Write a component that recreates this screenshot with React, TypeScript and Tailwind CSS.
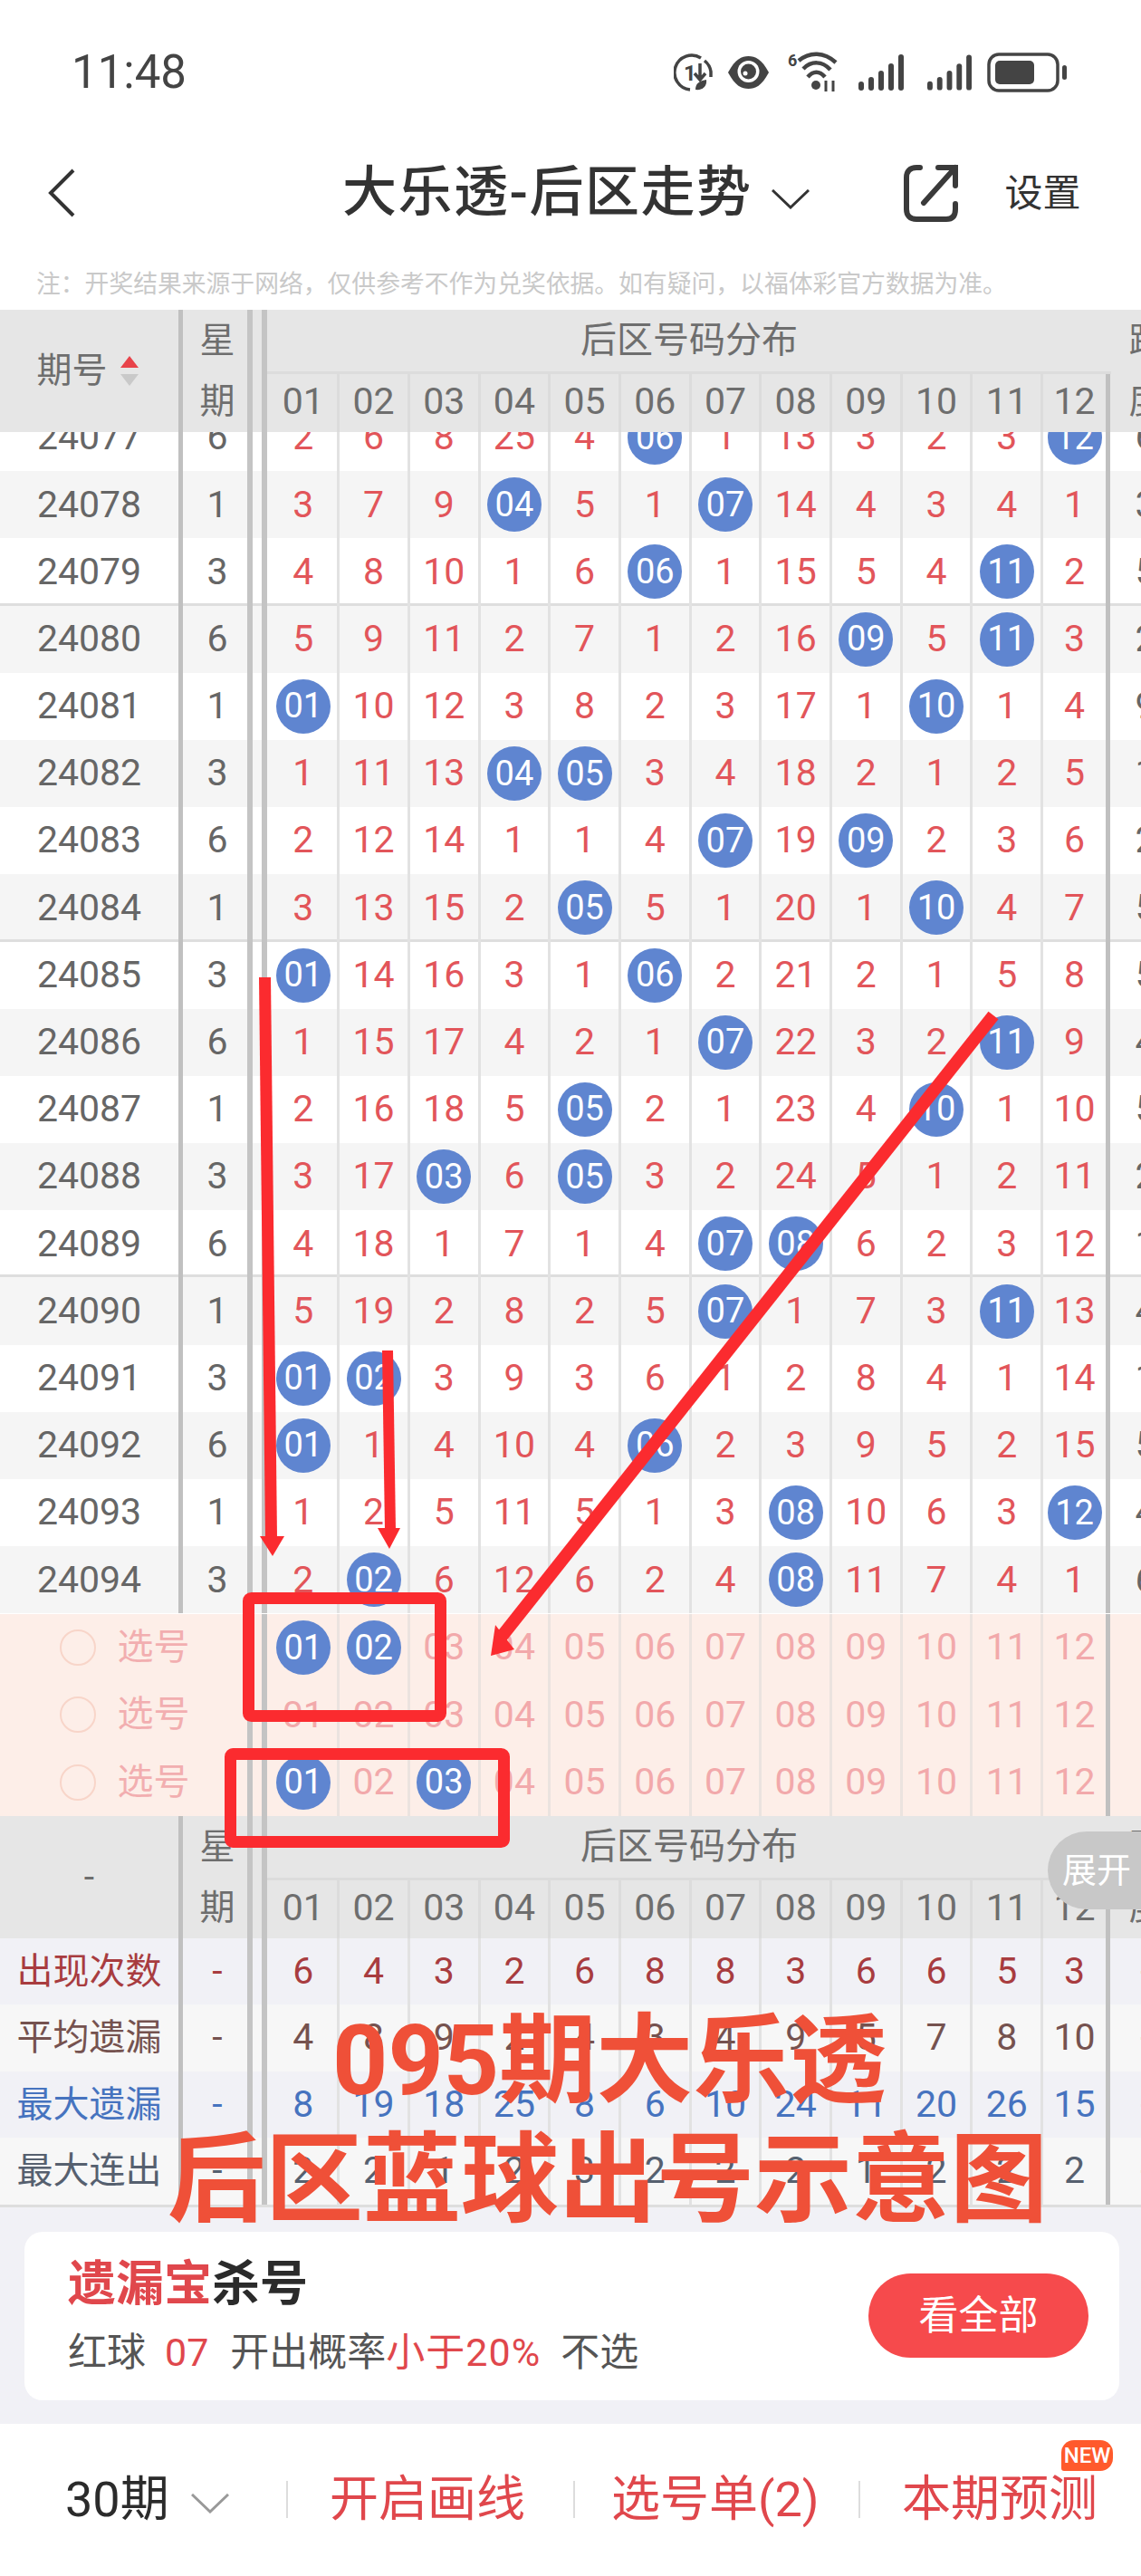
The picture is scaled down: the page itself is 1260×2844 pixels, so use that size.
import React from "react";

// 0 in a row means the number came up in that column, so it is drawn as a ball
const ROWS: [string, number, number[], number][] = [
  ["24077", 6, [2, 6, 8, 25, 4, 0, 1, 13, 3, 2, 3, 0], 6],
  ["24078", 1, [3, 7, 9, 0, 5, 1, 0, 14, 4, 3, 4, 1], 3],
  ["24079", 3, [4, 8, 10, 1, 6, 0, 1, 15, 5, 4, 0, 2], 5],
  ["24080", 6, [5, 9, 11, 2, 7, 1, 2, 16, 0, 5, 0, 3], 2],
  ["24081", 1, [0, 10, 12, 3, 8, 2, 3, 17, 1, 0, 1, 4], 9],
  ["24082", 3, [1, 11, 13, 0, 0, 3, 4, 18, 2, 1, 2, 5], 1],
  ["24083", 6, [2, 12, 14, 1, 1, 4, 0, 19, 0, 2, 3, 6], 2],
  ["24084", 1, [3, 13, 15, 2, 0, 5, 1, 20, 1, 0, 4, 7], 5],
  ["24085", 3, [0, 14, 16, 3, 1, 0, 2, 21, 2, 1, 5, 8], 5],
  ["24086", 6, [1, 15, 17, 4, 2, 1, 0, 22, 3, 2, 0, 9], 4],
  ["24087", 1, [2, 16, 18, 5, 0, 2, 1, 23, 4, 0, 1, 10], 5],
  ["24088", 3, [3, 17, 0, 6, 0, 3, 2, 24, 5, 1, 2, 11], 2],
  ["24089", 6, [4, 18, 1, 7, 1, 4, 0, 0, 6, 2, 3, 12], 1],
  ["24090", 1, [5, 19, 2, 8, 2, 5, 0, 1, 7, 3, 0, 13], 4],
  ["24091", 3, [0, 0, 3, 9, 3, 6, 1, 2, 8, 4, 1, 14], 1],
  ["24092", 6, [0, 1, 4, 10, 4, 0, 2, 3, 9, 5, 2, 15], 5],
  ["24093", 1, [1, 2, 5, 11, 5, 1, 3, 0, 10, 6, 3, 0], 4],
  ["24094", 3, [2, 0, 6, 12, 6, 2, 4, 0, 11, 7, 4, 1], 6],
];

const STATS = [
  { label: "出现次数", text: "text-[#a83c3f]", bg: "bg-[#f1f1f6]", nums: [6, 4, 3, 2, 6, 8, 8, 3, 6, 6, 5, 3] },
  { label: "平均遗漏", text: "text-[#75524f]", bg: "bg-[#f7f7f7]", nums: [4, 8, 9, 2, 4, 3, 4, 9, 5, 7, 8, 10] },
  { label: "最大遗漏", text: "text-[#4673bf]", bg: "bg-[#f1f1f6]", nums: [8, 19, 18, 25, 8, 6, 10, 24, 11, 20, 26, 15] },
  { label: "最大连出", text: "text-[#56606f]", bg: "bg-[#f7f7f7]", nums: [2, 2, 1, 2, 3, 2, 2, 2, 1, 2, 2, 2] },
];

const PICKS = [[1, 2], [], [1, 3]];

const NOTE = "注\uFF1A开奖结果来源于网络\uFF0C仅供参考不作为兑奖依据。如有疑问\uFF0C以福体彩官方数据为准。";

const two = (n: number) => String(n).padStart(2, "0");

function Ball({ n }: { n: number }) {
  return (
    <span className="flex h-[60px] w-[60px] items-center justify-center rounded-full bg-[#5f85d0] text-[38px] text-white">
      {two(n)}
    </span>
  );
}

function Cell({ line, children }: { line: string; children: React.ReactNode }) {
  return (
    <div
      className={`flex h-full w-[77.7px] shrink-0 items-center justify-center border-r-[3px] last:w-[74px] last:border-r-[5.5px] last:border-r-[#c0c0c0] ${line}`}
    >
      {children}
    </div>
  );
}

// one table row: period | week | gap | twelve numbers | clipped column on the right
function Row({
  className,
  label,
  week,
  side,
  line = "border-[#e2e2e2]",
  children,
  open = false,
}: {
  className: string;
  label: React.ReactNode;
  week: React.ReactNode;
  side: React.ReactNode;
  line?: string;
  children: React.ReactNode;
  open?: boolean;
}) {
  return (
    <div className={`flex w-[1305px] items-stretch ${className}`}>
      <div className="flex w-[197px] shrink-0 items-center justify-center">{label}</div>
      <div
        className={`flex w-[82px] shrink-0 items-center justify-center border-r-[6px] border-r-[#c4c4c4] border-l-[5px] pl-[5px] ${
          open ? "border-l-transparent" : "border-l-[#c0c0c0]"
        }`}
      >
        {week}
      </div>
      <div className="w-[10px] shrink-0" />
      <div className="w-[8.5px] shrink-0 border-l-[6px] border-l-[#c4c4c4]" />
      <div className="flex">
        {Array.from({ length: 12 }, (_, i) => (
          <Cell key={i} line={line}>
            {Array.isArray(children) ? children[i] : null}
          </Cell>
        ))}
      </div>
      <div className="flex w-[78px] shrink-0 items-center justify-center">{side}</div>
    </div>
  );
}

function TableHeader({ label, className }: { label: React.ReactNode; className: string }) {
  return (
    <div className={`flex w-[1305px] items-stretch bg-[#e6e6e6] text-[#6e6e6e] ${className}`}>
      <div className="flex w-[197px] shrink-0 items-center justify-center">{label}</div>
      <div className="flex w-[82px] shrink-0 flex-col items-center border-r-[6px] border-r-[#c4c4c4] border-l-[5px] border-l-[#c0c0c0] pl-[5px]">
        <span className="flex h-[68px] items-center text-[39px]">星</span>
        <span className="flex h-[67px] items-center text-[39px]">期</span>
      </div>
      <div className="w-[10px] shrink-0" />
      <div className="flex w-[938px] shrink-0 flex-col border-l-[6px] border-l-[#c4c4c4]">
        <div className="flex h-[71px] items-center justify-center border-b-[3px] border-b-[#dcdcdc] text-[40px]">
          后区号码分布
        </div>
        <div className="flex flex-1 pl-[2.5px]">
          {Array.from({ length: 12 }, (_, i) => (
            <Cell key={i} line="border-[#dcdcdc]">
              <span className="-mt-[2px] text-[41px]">{two(i + 1)}</span>
            </Cell>
          ))}
        </div>
      </div>
      <div className="flex w-[78px] shrink-0 flex-col items-center text-[39px]">
        <span className="flex h-[68px] items-center">跨</span>
        <span className="flex h-[67px] items-center">度</span>
      </div>
    </div>
  );
}

function SortArrows() {
  return (
    <svg width="20" height="34" viewBox="0 0 20 34" className="ml-[14px]">
      <path d="M10 0 L20 13 L0 13 Z" fill="#e8434a" />
      <path d="M0 20 L20 20 L10 33 Z" fill="#c9c9c9" />
    </svg>
  );
}

function StatusIcons() {
  return (
    <div className="flex items-center pr-[82px] text-[#444]">
      <svg width="44" height="42" viewBox="0 0 44 42" fill="none" stroke="#444">
        <path d="M30 5 A19 19 0 1 0 18 40" strokeWidth="3.5" />
        <path d="M34 8 A19 19 0 0 1 41 20 L41 26" strokeWidth="3.5" />
        <text x="11" y="30" fontSize="24" fontWeight="700" fill="#444" stroke="none">1</text>
        <path d="M29 11 V28 M23 22 L29 29 L35 22" strokeWidth="3.5" />
        <path d="M24 40 C24 32 30 30 36 29 C37 36 32 41 24 40 Z" fill="#444" stroke="none" />
      </svg>
      <svg width="47" height="36" viewBox="0 0 47 36" className="ml-[15px]">
        <path d="M1 18 C9 3 16 0 23.5 0 C31 0 38 3 46 18 C38 33 31 36 23.5 36 C16 36 9 33 1 18 Z" fill="#444" />
        <circle cx="23.5" cy="17" r="12" fill="#fff" />
        <circle cx="23.5" cy="17" r="8.5" fill="#444" />
        <circle cx="20" cy="19" r="2.5" fill="#fff" />
      </svg>
      <svg width="55" height="46" viewBox="0 0 55 46" fill="none" stroke="#444" strokeWidth="4.5" className="ml-[20px]">
        <text x="0" y="16" fontSize="18" fontWeight="700" fill="#444" stroke="none">6</text>
        <path d="M12 10 C24 0 40 0 53 12" />
        <path d="M17 19 C26 10 38 10 47 20" />
        <path d="M22 28 C28 21 35 21 41 28" />
        <circle cx="31" cy="37" r="5" fill="#444" stroke="none" />
        <path d="M42 32 V44 M50 32 V44" strokeWidth="3" />
      </svg>
      <svg width="50" height="40" viewBox="0 0 50 40" className="ml-[23px]" fill="#444">
        <rect x="0" y="30" width="6" height="10" rx="3" />
        <rect x="11" y="25" width="6" height="15" rx="3" />
        <rect x="22" y="18" width="6" height="22" rx="3" />
        <rect x="33" y="10" width="6" height="30" rx="3" />
        <rect x="44" y="0" width="6" height="40" rx="3" />
      </svg>
      <svg width="49" height="40" viewBox="0 0 50 40" className="ml-[26px]" fill="#444">
        <rect x="0" y="30" width="6" height="10" rx="3" />
        <rect x="11" y="25" width="6" height="15" rx="3" />
        <rect x="22" y="18" width="6" height="22" rx="3" />
        <rect x="33" y="10" width="6" height="30" rx="3" />
        <rect x="44" y="0" width="6" height="40" rx="3" />
      </svg>
      <svg width="88" height="44" viewBox="0 0 88 44" className="ml-[17px]">
        <rect x="2" y="2" width="76" height="40" rx="11" fill="none" stroke="#444" strokeWidth="3.5" />
        <rect x="9" y="9" width="43" height="26" rx="5" fill="#444" />
        <rect x="83" y="14" width="5" height="16" rx="2.5" fill="#444" />
      </svg>
    </div>
  );
}

// hand drawn marks on top of the screenshot
function Annotations() {
  return (
    <svg width="1260" height="2844" viewBox="0 0 1260 2844" className="pointer-events-none absolute top-0 left-0">
      <g fill="#fb2b2f">
        <path d="M286 1079 L299 1079 L306 1698 L293 1698 Z" />
        <path d="M287 1696 L314 1696 L301 1718 Z" />
        <path d="M422 1491 L434 1491 L437 1690 L425 1690 Z" />
        <path d="M417 1687 L442 1687 L430 1710 Z" />
        <path d="M542 1828 L547 1794 L568 1821 Z" />
      </g>
      <path d="M1097 1121 L553 1808" stroke="#fb2b2f" strokeWidth="14" fill="none" />
      <rect x="274.5" y="1764.5" width="212" height="130" rx="3" fill="none" stroke="#fb2b2f" strokeWidth="13" />
      <rect x="254.5" y="1936.5" width="302" height="97" rx="3" fill="none" stroke="#fb2b2f" strokeWidth="13" />
    </svg>
  );
}

export default function App() {
  return (
    <div className="relative h-[2844px] w-[1260px] overflow-hidden bg-white text-[41px] [font-family:Roboto,'Noto_Sans_CJK_SC',sans-serif]">
      {/* status bar */}
      <div className="flex h-[160px] items-center justify-between">
        <span className="pl-[79px] text-[51px] text-[#444]">11:48</span>
        <StatusIcons />
      </div>

      {/* title bar */}
      <div className="flex h-[106px] items-center text-[#333]">
        <svg width="30" height="54" viewBox="0 0 30 54" fill="none" stroke="#333" strokeWidth="4" className="ml-[53px]">
          <path d="M28 2 L3 27 L28 52" />
        </svg>
        <span className="ml-[295px] text-[60px] leading-none font-medium tracking-[1.5px]">大乐透-后区走势</span>
        <svg width="42" height="22" viewBox="0 0 42 22" fill="none" stroke="#333" strokeWidth="3" className="mt-[14px] ml-[22px]">
          <path d="M1 1 L21 20 L41 1" />
        </svg>
        <svg width="60" height="64" viewBox="0 0 60 64" fill="none" stroke="#3a3a3a" strokeWidth="6" strokeLinecap="round" className="ml-[104px]">
          <path d="M18 4 H14 C7 4 3 8 3 15 V50 C3 57 7 61 14 61 H47 C54 61 57 57 57 50 V44" />
          <path d="M38 4 H57 V24" />
          <path d="M57 4 L22 43" />
        </svg>
        <span className="ml-[51px] text-[42px]">设置</span>
      </div>

      <div className="h-[76px] pt-[20px] pl-[40px] text-[26.8px] leading-[56px] whitespace-nowrap text-[#c9c9c9]">
        {NOTE}
      </div>

      <TableHeader
        className="h-[135px]"
        label={
          <div className="flex items-center pr-[4px]">
            <span className="text-[39px]">期号</span>
            <SortArrows />
          </div>
        }
      />

      {/* scrolled rows, the first is cut by the header */}
      <div className="h-[1305px] overflow-hidden">
        <div className="-mt-[31px]">
          {ROWS.map(([id, week, nums, side], r) => (
            <Row
              key={id}
              className={`h-[74.2px] ${r % 2 ? "bg-[#f5f5f5]" : "bg-white"} ${
                r === 2 || r === 7 || r === 12 ? "shadow-[inset_0_-3px_0_#dedede]" : ""
              }`}
              label={<span className="text-[#666]">{id}</span>}
              week={<span className="text-[#666]">{week}</span>}
              side={<span className="text-[#666]">{side}</span>}
            >
              {nums.map((n, i) =>
                n === 0 ? <Ball key={i} n={i + 1} /> : <span key={i} className="text-[#e2555a]">{n}</span>
              )}
            </Row>
          ))}
        </div>
      </div>

      {/* pick rows */}
      {PICKS.map((balls, r) => (
        <Row
          key={r}
          open
          className="h-[74.33px] bg-[#fdeee8]"
          line="border-[#ebe3df]"
          label={
            <div className="flex translate-x-[24px] items-center whitespace-nowrap">
              <span className="ml-[30px] h-[40px] w-[40px] rounded-full border-2 border-[#f8d5c9]" />
              <span className="ml-[24px] text-[40px] text-[#f2aeb0]">选号</span>
            </div>
          }
          week={null}
          side={null}
        >
          {Array.from({ length: 12 }, (_, i) =>
            balls.includes(i + 1) ? (
              <Ball key={i} n={i + 1} />
            ) : (
              <span key={i} className="text-[#f2a9ab]">{two(i + 1)}</span>
            )
          )}
        </Row>
      ))}

      <TableHeader className="h-[135px]" label={<span>-</span>} />

      {/* summary rows */}
      {STATS.map((s) => (
        <Row
          key={s.label}
          className={`h-[73.5px] ${s.bg} ${s.text}`}
          label={<span className="text-[40px]">{s.label}</span>}
          week={<span>-</span>}
          side={<span>-</span>}
        >
          {s.nums.map((n, i) => (
            <span key={i}>{n}</span>
          ))}
        </Row>
      ))}

      {/* kill number card */}
      <div className="h-[242px] border-t-[3px] border-t-[#dedede] bg-[#f1f1f6] px-[27px] pt-[27px]">
        <div className="flex h-[186px] w-[1209px] items-center justify-between rounded-[20px] bg-white pr-[34px] pl-[48px]">
          <div className="flex flex-col gap-[20px]">
            <div className="text-[53px] leading-[60px] font-bold text-[#2b2b2b]">
              <span className="text-[#e0474c]">遗漏宝</span>杀号
            </div>
            <div className="flex h-[50px] items-center text-[43px] whitespace-nowrap text-[#555]">
              <span>红球</span>
              <span className="ml-[21px] text-[#e0474c]">07</span>
              <span className="ml-[24px]">开出概率</span>
              <span className="tracking-[1px] text-[#e0474c]">小于20%</span>
              <span className="ml-[22px]">不选</span>
            </div>
          </div>
          <div className="flex h-[93px] w-[243px] items-center justify-center rounded-full bg-[#f64a4c] text-[44px] text-white">
            看全部
          </div>
        </div>
      </div>

      {/* bottom bar */}
      <div className="flex h-[168px] items-center text-[54px] whitespace-nowrap text-[#e0474c]">
        <div className="flex w-[316px] items-center pl-[72px] text-[#2b2b2b]">
          <span>30期</span>
          <svg width="42" height="22" viewBox="0 0 42 22" fill="none" stroke="#999" strokeWidth="3" className="mt-[8px] ml-[24px]">
            <path d="M1 1 L21 20 L41 1" />
          </svg>
        </div>
        <div className="h-[41px] w-[2px] bg-[#ddd]" />
        <div className="w-[315px] pl-[46px]">开启画线</div>
        <div className="h-[41px] w-[2px] bg-[#ddd]" />
        <div className="w-[313px] pl-[40px]">选号单(2)</div>
        <div className="h-[41px] w-[2px] bg-[#ddd]" />
        <div className="relative pl-[46px]">
          本期预测
          <span className="absolute -top-[25px] left-[222px] flex h-[34px] w-[57px] items-center justify-center rounded-t-[14px] rounded-br-[14px] rounded-bl-[3px] bg-[#ff5a2c] text-[24px] font-medium text-white">
            NEW
          </span>
        </div>
      </div>

      {/* floating expand pill */}
      <div className="absolute top-[2022px] right-0 flex h-[86px] w-[103px] items-center rounded-l-full bg-[#c8c8c8] pl-[16px] text-[38px] whitespace-nowrap text-white">
        展开
      </div>

      <Annotations />

      <div className="absolute top-[2222px] left-[367px] text-[107px] leading-none font-bold whitespace-nowrap text-[#ef5038]">
        095期大乐透
      </div>
      <div className="absolute top-[2353px] left-[185px] text-[108px] leading-none font-bold whitespace-nowrap text-[#ef5038]">
        后区蓝球出号示意图
      </div>
    </div>
  );
}
